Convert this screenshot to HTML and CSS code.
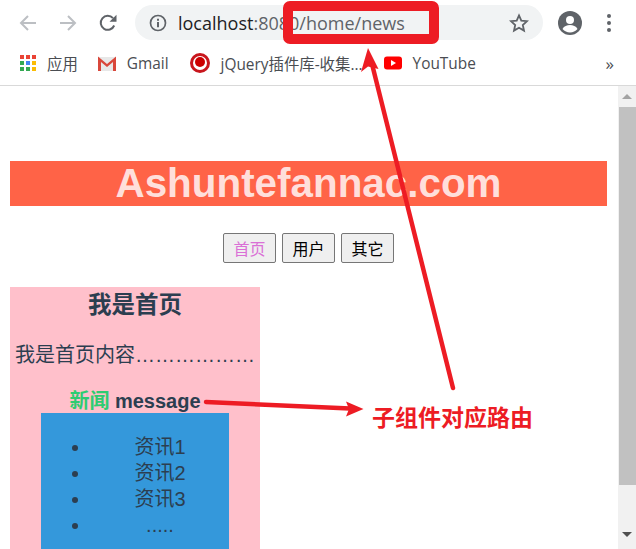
FILE: index.html
```html
<!DOCTYPE html>
<html>
	<head>
		<meta charset="utf-8">
		<title>Ashuntefannac.com</title>
		<link rel="stylesheet" href="styles.css">
	</head>
	<body>
		<div class="toolbar">
			<svg class="navIcon" viewBox="0 0 18 18"><path d="M17 9H2M9 2L2 9l7 7" fill="none" stroke="#bcbfc3" stroke-width="2"/></svg>
			<svg class="navIcon" viewBox="0 0 18 18"><path d="M1 9h15M9 2l7 7-7 7" fill="none" stroke="#bcbfc3" stroke-width="2"/></svg>
			<svg class="navIcon" viewBox="0 0 18 18"><path d="M15.2 11.5A7 7 0 1 1 14 4.2" fill="none" stroke="#5f6368" stroke-width="2"/><path d="M17.5 0.8v7h-7z" fill="#5f6368"/></svg>
			<div class="omnibox">
				<svg class="infoIcon" viewBox="0 0 18 18"><circle cx="9" cy="9" r="7.5" fill="none" stroke="#5f6368" stroke-width="1.7"/><path d="M8 8h2v5.2H8zM8 4.8h2v2H8z" fill="#5f6368"/></svg>
				<span class="urlHost">localhost</span><span class="urlRest">:8080/home/news</span>
				<svg class="starIcon" viewBox="0 0 20 20"><path d="M10 2.4l2.3 5.2 5.7.6-4.2 3.8 1.2 5.6-5-2.9-5 2.9 1.2-5.6L2 8.2l5.7-.6z" fill="none" stroke="#5f6368" stroke-width="1.8"/></svg>
			</div>
			<svg class="avatarIcon" viewBox="0 0 24 24"><circle cx="12" cy="12" r="12" fill="#5f6368"/><circle cx="12" cy="9" r="4" fill="#fff"/><path d="M4.5 18c1.5-3 4.500-4 7.500-4s6 1 7.500 4a10 10 0 0 1-15 0z" fill="#fff"/></svg>
			<div class="dots"><span></span><span></span><span></span></div>
		</div>

		<div class="bookmarks">
			<div class="mark">
				<svg class="markIcon" viewBox="0 0 16 16">
					<path d="M0 0h4v4H0z" fill="#ea4335"/><path d="M6 0h4v4H6z" fill="#ea4335"/><path d="M12 0h4v4h-4z" fill="#ea4335"/>
					<path d="M0 6h4v4H0z" fill="#34a853"/><path d="M6 6h4v4H6z" fill="#4285f4"/><path d="M12 6h4v4h-4z" fill="#fbbc04"/>
					<path d="M0 12h4v4H0z" fill="#34a853"/><path d="M6 12h4v4H6z" fill="#34a853"/><path d="M12 12h4v4h-4z" fill="#fbbc04"/>
				</svg>
				<span>应用</span>
			</div>
			<div class="mark">
				<svg class="markIcon gmail" viewBox="0 0 20 16"><path d="M1 2h18v14H1z" fill="#e8e8e8"/><path d="M1 16V1.500L10 9l9-7.500V16h-3V7l-6 5-6-5v9z" fill="#d9473b"/></svg>
				<span>Gmail</span>
			</div>
			<div class="mark">
				<svg class="markIcon jquery" viewBox="0 0 20 20"><circle cx="10" cy="10" r="8.500" fill="#fff" stroke="#c8161d" stroke-width="3"/><circle cx="10" cy="9" r="5" fill="#c00"/></svg>
				<span>jQuery插件库-收集...</span>
			</div>
			<div class="mark">
				<svg class="markIcon youtube" viewBox="0 0 18 14"><rect width="18" height="13" y="0.500" rx="3" fill="#f00"/><path d="M7 4l5 3-5 3z" fill="#fff"/></svg>
				<span>YouTube</span>
			</div>
			<div class="more">»</div>
		</div>

		<div class="viewport">
			<div class="page">
				<h1 class="siteTitle">Ashuntefannac.com</h1>
				<div class="navButtons">
					<button class="navButton navActive">首页</button>
					<button class="navButton">用户</button>
					<button class="navButton">其它</button>
				</div>
				<div class="homeBox">
					<h2 class="homeTitle">我是首页</h2>
					<p class="homeText">我是首页内容………………</p>
					<h3 class="subTitle"><span class="subActive">新闻</span> message</h3>
					<div class="newsBox">
						<ul class="newsList">
							<li>资讯1</li>
							<li>资讯2</li>
							<li>资讯3</li>
							<li>.....</li>
						</ul>
					</div>
				</div>
			</div>
			<div class="scrollbar">
				<div class="scrollUp"></div>
				<div class="scrollThumb"></div>
				<div class="scrollDown"></div>
			</div>
		</div>

		<!-- annotations drawn on top of the screenshot -->
		<svg class="annotations" viewBox="0 0 636 549">
			<rect x="288" y="6" width="146" height="33" rx="2" fill="none" stroke="#ed1c24" stroke-width="10"/>
			<path d="M453 388L372 64" stroke="#ed1c24" stroke-width="4.500" stroke-linecap="round"/>
			<path d="M368 48L378.500 69 368 66.500 361 72z" fill="#ed1c24"/>
			<path d="M206 402L350 408.500" stroke="#ed1c24" stroke-width="4.500" stroke-linecap="round"/>
			<path d="M363.500 409L346 401.500 349 409 346 416.500z" fill="#ed1c24"/>
		</svg>
		<div class="routeNote">子组件对应路由</div>
	</body>
</html>
```

FILE: styles.css
```css
html, body {
	margin: 0;
	height: 549px;
	overflow: hidden;
}

body {
	position: relative;
	width: 636px;
	background-color: #fff;
	font-family: "Liberation Sans", "Noto Sans CJK SC", sans-serif;
	color: #2c3e50;
}

/* browser bar */
.toolbar {
	display: flex;
	align-items: center;
	height: 45px;
	box-sizing: border-box;
	padding: 0 0 0 19px;
}

.navIcon {
	width: 18px;
	height: 18px;
	margin-right: 22px;
}

.omnibox {
	display: flex;
	align-items: center;
	width: 408px;
	height: 35px;
	margin-left: -4px;
	box-sizing: border-box;
	padding: 0 14px 0 14px;
	border-radius: 18px;
	background-color: #f1f3f4;
	font-family: "Open Sans", sans-serif;
	font-size: 18px;
}

.infoIcon {
	width: 18px;
	height: 18px;
	margin-right: 11px;
}

.urlHost {
	color: #202124;
}

.urlRest {
	color: #5f6368;
}

.starIcon {
	width: 20px;
	height: 20px;
	margin-left: auto;
}

.avatarIcon {
	width: 24px;
	height: 24px;
	margin-left: 15px;
}

.dots {
	display: flex;
	flex-direction: column;
	gap: 3px;
	margin-left: 25px;
}

.dots span {
	width: 4px;
	height: 4px;
	border-radius: 50%;
	background-color: #5f6368;
}

.bookmarks {
	position: relative;
	display: flex;
	align-items: center;
	height: 41px;
	box-sizing: border-box;
	padding: 0 0 4px 20px;
	border-bottom: 1px solid #d9d9d9;
	font-family: "Open Sans", "Noto Sans CJK SC", sans-serif;
	font-size: 15.400px;
	color: #4a4d52;
}

.mark {
	display: flex;
	align-items: center;
	margin-right: 21px;
}

.markIcon {
	width: 16px;
	height: 16px;
	margin-right: 11px;
}

.gmail {
	width: 20px;
	margin-left: -2px;
	margin-right: 10px;
}

.jquery {
	width: 20px;
	height: 20px;
	margin-right: 11px;
}

.youtube {
	width: 18px;
	height: 14px;
}

.more {
	margin-left: auto;
	margin-right: 22px;
	font-size: 17px;
	line-height: 17px;
}

/* page */
.viewport {
	display: flex;
	height: 463px;
}

.page {
	flex: 1;
	box-sizing: border-box;
	height: 100%;
	padding: 75px 11px 0 10px;
	overflow: hidden;
}

.siteTitle {
	margin: 0;
	height: 45px;
	background-color: #ff6347;
	color: #ffdfdb;
	font-size: 40.400px;
	line-height: 45px;
	text-align: center;
}

.navButtons {
	display: flex;
	justify-content: center;
	gap: 6px;
	margin-top: 27px;
}

.navButton {
	width: 53px;
	height: 30px;
	padding: 0;
	border: 1px solid #767676;
	border-radius: 2px;
	background-color: #efefef;
	font-family: "Noto Sans CJK SC", sans-serif;
	font-size: 16px;
	color: #000;
}

.navActive {
	color: #da70d6;
}

.homeBox {
	width: 250px;
	height: 400px;
	margin-top: 24px;
	background-color: #ffc0cb;
	text-align: center;
}

.homeTitle {
	margin: 0;
	padding-top: 2px;
	font-size: 23.500px;
	line-height: 32px;
}

.homeText {
	margin: 19px 0 0;
	font-size: 20px;
	line-height: 30px;
	white-space: nowrap;
}

.subTitle {
	margin: 18px 0 0;
	font-size: 20px;
	line-height: 26px;
}

.subActive {
	color: #2ecc71;
}

.newsBox {
	width: 188px;
	height: 200px;
	margin: -1px 0 0 31px;
	background-color: #3498db;
	overflow: hidden;
}

.newsList {
	margin: 21px 0 0;
	padding: 0 0 0 50px;
	font-size: 20px;
	line-height: 26px;
}

/* scrollbar */
.scrollbar {
	display: flex;
	flex-direction: column;
	align-items: center;
	width: 18px;
	height: 100%;
	background-color: #f1f1f1;
}

.scrollUp {
	width: 0;
	height: 0;
	margin-top: 8px;
	border-left: 5px solid transparent;
	border-right: 5px solid transparent;
	border-bottom: 5px solid #a3a3a3;
}

.scrollThumb {
	align-self: stretch;
	height: 378px;
	margin: 8px 0 0 1px;
	background-color: #c1c1c1;
}

.scrollDown {
	width: 0;
	height: 0;
	margin-top: 47px;
	border-left: 5px solid transparent;
	border-right: 5px solid transparent;
	border-top: 5px solid #505050;
}

/* annotations */
.annotations {
	position: absolute;
	left: 0;
	top: 0;
	width: 636px;
	height: 549px;
}

.routeNote {
	position: absolute;
	left: 372px;
	top: 400px;
	font-family: "Noto Sans CJK SC", sans-serif;
	font-size: 23px;
	font-weight: bold;
	line-height: 33px;
	color: #ed1c24;
	white-space: nowrap;
}
```
